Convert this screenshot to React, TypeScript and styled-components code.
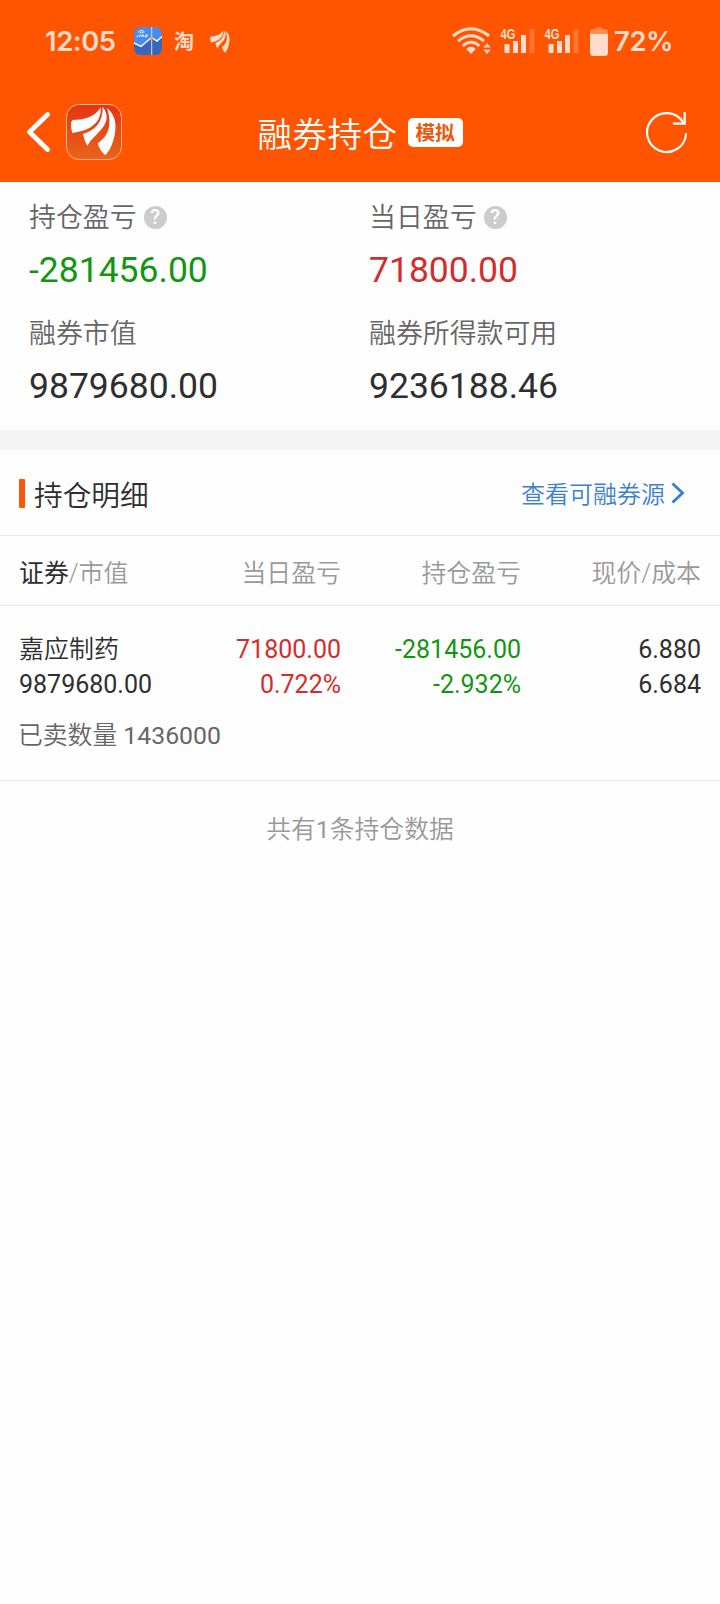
import React from "react";
import styled, { createGlobalStyle } from "styled-components";

const GlobalStyle = createGlobalStyle`
  body { margin: 0; background: #fff; }
  * { box-sizing: border-box; }
`;

const Page = styled.div`
  width: 720px;
  min-height: 1604px;
  background: #fefefe;
  color: #2e2e2e;
  font-family: Roboto, "Noto Sans CJK SC", sans-serif;
`;

const Header = styled.header`
  height: 182px;
  background: #ff5500;
  color: #fff;
`;

const StatusBar = styled.div`
  height: 82px;
  padding: 0 46px 0 45px;
  display: flex;
  justify-content: space-between;
  align-items: center;
  color: #ffdccb;
`;

const StatusGroup = styled.div`
  display: flex;
  align-items: center;
  svg { display: block; }
`;

const StatusText = styled.span<{ $width: number }>`
  width: ${(p) => p.$width}px;
  font: 600 27.4px/30px Inter, sans-serif;
  letter-spacing: -0.4px;
  white-space: nowrap;
`;

const TaoMark = styled.span`
  margin: 0 16px 0 12px;
  font: 700 20px/30px "Noto Sans CJK SC", sans-serif;
`;

const NavBar = styled.nav`
  height: 100px;
  padding: 0 32px 0 26px;
  display: grid;
  grid-template-columns: 1fr auto 1fr;
  align-items: center;
  svg { display: block; }
`;

const NavStart = styled.div`
  display: flex;
  align-items: center;
  gap: 15px;
`;

const NavTitle = styled.div`
  display: flex;
  align-items: center;
  gap: 10px;
  padding-left: 6px;
`;

const Title = styled.h1`
  margin: 0;
  padding-top: 5px;
  font-size: 34.5px;
  line-height: 50px;
  font-weight: 350;
  letter-spacing: 0.5px;
`;

const Badge = styled.span`
  width: 55px;
  height: 29px;
  border-radius: 5px;
  background: #fff;
  color: #e8590c;
  font-size: 19.6px;
  line-height: 31px;
  font-weight: 700;
  text-align: center;
`;

const NavEnd = styled.div`
  display: flex;
  justify-content: flex-end;
`;

const Summary = styled.section`
  height: 248px;
  padding: 16px 0 0 29px;
  display: grid;
  grid-template-columns: 340px 1fr;
  grid-auto-rows: 116px;
`;

const Metric = styled.div``;

const MetricLabel = styled.div`
  display: flex;
  align-items: center;
  gap: 7px;
  height: 40px;
  color: #666;
  font-size: 26.9px;
  font-weight: 350;
  line-height: 43px;
`;

const MetricValue = styled.div<{ $color?: string }>`
  height: 64px;
  color: ${(p) => p.$color ?? "#2e2e2e"};
  font-size: 35.5px;
  line-height: 64px;
`;

const HelpDot = styled.span`
  width: 23px;
  height: 23px;
  margin-bottom: 2px;
  border-radius: 50%;
  background: #ccc;
  color: #fff;
  font-size: 20px;
  line-height: 23px;
  font-weight: 500;
  text-align: center;
`;

const Divider = styled.div`
  height: 20px;
  background: #f4f4f4;
`;

const SectionHead = styled.div`
  height: 86px;
  padding: 4px 35px 0 19px;
  display: flex;
  align-items: center;
  border-bottom: 1px solid #e8e8e8;
`;

const Accent = styled.i`
  width: 6px;
  height: 29px;
  margin: 0 9px 3px 0;
  border-radius: 1px;
  background: #f9560a;
`;

const SectionTitle = styled.h2`
  margin: 0;
  padding-top: 2px;
  font-size: 28.7px;
  line-height: 40px;
  font-weight: 350;
`;

const SourceLink = styled.a`
  margin-left: auto;
  display: flex;
  align-items: center;
  gap: 6px;
  color: #3c80d2;
  font-size: 24px;
  font-weight: 350;
  line-height: 36px;
  svg { margin-bottom: 3px; }
`;

const TableRow = styled.div`
  display: grid;
  grid-template-columns: 142px 180px 180px 180px;
  padding: 0 19px;
`;

const TableHead = styled(TableRow)`
  height: 70px;
  padding-top: 3px;
  border-bottom: 1px solid #e8e8e8;
  color: #999;
  font-size: 24.9px;
  font-weight: 350;
  line-height: 70px;
`;

const HeadStrong = styled.span`
  color: #2e2e2e;
  font-weight: 400;
`;

const Cell = styled.div<{ $color?: string; $end?: boolean; $light?: boolean }>`
  color: ${(p) => p.$color ?? "inherit"};
  font-weight: ${(p) => (p.$light ? 350 : "inherit")};
  text-align: ${(p) => (p.$end ? "right" : "left")};
  white-space: nowrap;
`;

const Holding = styled.div`
  height: 175px;
  padding-top: 26px;
  border-bottom: 1px solid #e8e8e8;
  font-size: 25px;
  line-height: 35px;
`;

const Sold = styled.div`
  padding: 16px 18px 0;
  color: #666;
  font-size: 24.8px;
`;

const Light = styled.span`
  font-weight: 350;
`;

const Footer = styled.p`
  margin: 0;
  padding-top: 30px;
  color: #999;
  font-size: 24.8px;
  line-height: 37px;
  text-align: center;
`;

const RED = "#d32c2c";
const GREEN = "#129612";

const LEAVES = [
  "M213 372Q213 359 224 359Q276 361 303 322Q305 362 272 382Q250 395 217 399Q212 385 213 372Z",
  "M308 320Q332 350 308 383C294 401 271 418 262 438Q252 420 249 402C288 390 309 364 308 320Z",
  "M321 324C347 345 350 377 344 405Q336 445 316 466Q298 450 293 430C331 406 335 367 321 324Z",
];

const Leaves = () => (
  <>
    {LEAVES.map((d) => (
      <path key={d} d={d} fill="currentColor" />
    ))}
  </>
);

const AppLogo = () => (
  <svg width="56" height="56" viewBox="198 312 168 168">
    <defs>
      <linearGradient id="logoFill" x1="0" y1="0" x2="0" y2="1">
        <stop offset="0" stopColor="#e63312" />
        <stop offset="1" stopColor="#e9641a" />
      </linearGradient>
    </defs>
    <rect x="199.5" y="313.5" width="165" height="165" rx="38" fill="url(#logoFill)" stroke="#f7b78e" strokeWidth="3" />
    <Leaves />
  </svg>
);

const LeafMark = () => (
  <svg width="20" height="23" viewBox="211 318 139 150" preserveAspectRatio="none">
    <Leaves />
  </svg>
);

const StockAppIcon = () => (
  <svg width="28" height="28" viewBox="0 0 28 28">
    <rect width="28" height="28" rx="7" fill="#488cf0" />
    <path d="M0 16L7 19.5L17.5 10.5L23 14L28 9.5V21Q28 28 21 28H7Q0 28 0 21Z" fill="#3867bd" />
    <path d="M0 16L7 19.5L17.5 10.5L23 14L28 9.5" fill="none" stroke="#fff" strokeWidth="1.4" />
    <path d="M17.7 0V28" stroke="#e3d9b8" strokeWidth="1" />
    <circle cx="17.7" cy="10.7" r="1.6" fill="#e5a94a" />
    <path d="M4 5.5Q7 1.5 10.5 5M5.5 6Q7.5 4 9.5 6M2.5 10Q5 9.5 4 8M5.5 10L6.5 7.5M7.5 10L8.2 7.8Q10 7 9.3 10M11 9Q12 7 13.5 8L12.5 10Q10.5 10.5 11 9" fill="none" stroke="#fff" strokeWidth="0.9" />
  </svg>
);

const WifiIcon = () => (
  <svg width="39" height="28" viewBox="0 0 39 28">
    <g fill="none" stroke="currentColor" strokeWidth="2.9">
      <path d="M1 9Q19 -5.500 37 9" />
      <path d="M6 14.200Q19 3.500 32 14.200" />
      <path d="M10.700 19Q19 11.500 27.300 19" />
    </g>
    <path d="M14.300 22Q19 17.600 23.700 22L19 27Z" fill="currentColor" />
    <path d="M31.400 20.500L35 16.300L38.600 20.500ZM31.400 22.700L35 27L38.600 22.700Z" fill="currentColor" />
  </svg>
);

const SignalText = styled.text`
  font: 700 14px "Liberation Sans", sans-serif;
`;

const SignalIcon = () => (
  <svg width="35" height="32" viewBox="0 -3 35 32" fill="currentColor">
    <SignalText x="0.6" y="11" textLength="15" lengthAdjust="spacingAndGlyphs">4G</SignalText>
    <rect x="4.500" y="16" width="5" height="9" />
    <rect x="13" y="13" width="5" height="12" />
    <rect x="21" y="7" width="5" height="18" />
    <rect x="29.500" y="1" width="5" height="24" opacity="0.25" />
  </svg>
);

const BatteryIcon = () => (
  <svg width="18" height="29" viewBox="0 0 18 29">
    <path d="M0 7V5Q0 2.200 3 2.200H5.500Q6 0 9 0Q12 0 12.500 2.200H15Q18 2.200 18 5V7Z" fill="#ff8c55" />
    <path d="M0 7H18V25.500Q18 29 14.500 29H3.500Q0 29 0 25.500Z" fill="currentColor" />
  </svg>
);

const SignalPair = styled.div`
  display: flex;
  gap: 9px;
  margin: 0 11px 0 9px;
`;

const BatteryLevel = styled.div`
  display: flex;
  align-items: center;
  gap: 6px;
`;

const BackIcon = () => (
  <svg width="25" height="42" viewBox="0 0 25 42" fill="none" stroke="#fff" strokeWidth="4.800" strokeLinecap="round" strokeLinejoin="round">
    <path d="M21.500 3.500L3.500 21L21.500 38.500" />
  </svg>
);

const RefreshIcon = () => (
  <svg width="43" height="43" viewBox="0 0 43 43" fill="none" stroke="#fff" strokeWidth="2.200" strokeLinecap="square">
    <path d="M41 23.500A19.500 19.500 0 1 1 38 11" />
    <path d="M39.700 2V12.700H29" />
  </svg>
);

const ChevronIcon = () => (
  <svg width="14" height="22" viewBox="0 0 14 22" fill="none" stroke="currentColor" strokeWidth="3">
    <path d="M1.500 1.500L11.500 11L1.500 20.500" />
  </svg>
);

const metrics = [
  { label: "持仓盈亏", value: "-281456.00", color: GREEN, help: true },
  { label: "当日盈亏", value: "71800.00", color: RED, help: true },
  { label: "融券市值", value: "9879680.00" },
  { label: "融券所得款可用", value: "9236188.46" },
];

export default function App() {
  return (
    <Page>
      <GlobalStyle />
      <Header>
        <StatusBar>
          <StatusGroup>
            <StatusText $width={89}>12:05</StatusText>
            <StockAppIcon />
            <TaoMark>淘</TaoMark>
            <LeafMark />
          </StatusGroup>
          <StatusGroup>
            <WifiIcon />
            <SignalPair>
              <SignalIcon />
              <SignalIcon />
            </SignalPair>
            <BatteryLevel>
              <BatteryIcon />
              <StatusText $width={60}>72%</StatusText>
            </BatteryLevel>
          </StatusGroup>
        </StatusBar>
        <NavBar>
          <NavStart>
            <BackIcon />
            <AppLogo />
          </NavStart>
          <NavTitle>
            <Title>融券持仓</Title>
            <Badge>模拟</Badge>
          </NavTitle>
          <NavEnd>
            <RefreshIcon />
          </NavEnd>
        </NavBar>
      </Header>
      <Summary>
        {metrics.map((m) => (
          <Metric key={m.label}>
            <MetricLabel>
              {m.label}
              {m.help && <HelpDot>?</HelpDot>}
            </MetricLabel>
            <MetricValue $color={m.color}>{m.value}</MetricValue>
          </Metric>
        ))}
      </Summary>
      <Divider />
      <SectionHead>
        <Accent />
        <SectionTitle>持仓明细</SectionTitle>
        <SourceLink>
          查看可融券源
          <ChevronIcon />
        </SourceLink>
      </SectionHead>
      <TableHead>
        <Cell>
          <HeadStrong>证券</HeadStrong>/市值
        </Cell>
        <Cell $end>当日盈亏</Cell>
        <Cell $end>持仓盈亏</Cell>
        <Cell $end>现价/成本</Cell>
      </TableHead>
      <Holding>
        <TableRow>
          <Cell $light>嘉应制药</Cell>
          <Cell $end $color={RED}>71800.00</Cell>
          <Cell $end $color={GREEN}>-281456.00</Cell>
          <Cell $end>6.880</Cell>
          <Cell>9879680.00</Cell>
          <Cell $end $color={RED}>0.722%</Cell>
          <Cell $end $color={GREEN}>-2.932%</Cell>
          <Cell $end>6.684</Cell>
        </TableRow>
        <Sold>
          <Light>已卖数量</Light> 1436000
        </Sold>
      </Holding>
      <Footer>
        <Light>共有</Light>1<Light>条持仓数据</Light>
      </Footer>
    </Page>
  );
}
